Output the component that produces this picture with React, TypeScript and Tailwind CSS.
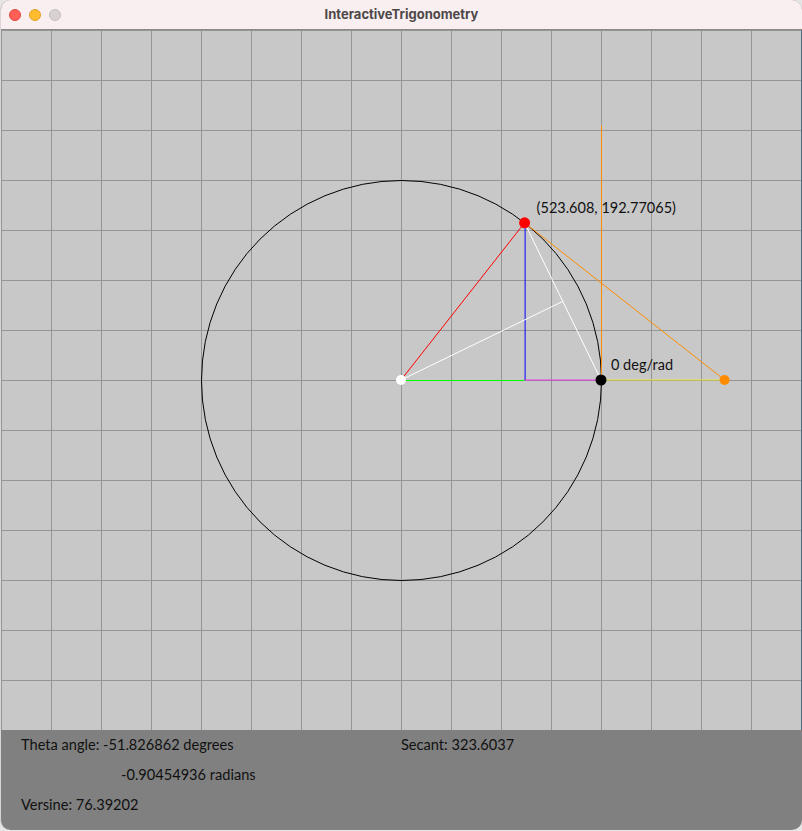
const CX = 400;
const CY = 350;
const R = 200;

const thetaDeg = -51.826862;
const thetaRad = -0.90454936;
const px = 523.608;
const py = 192.77065;
const secant = 323.6037;
const tangent = Math.tan(-thetaRad) * R;

const gridX = Array.from({ length: 17 }, (_, i) => i * 50);
const gridY = Array.from({ length: 15 }, (_, i) => i * 50);

const labelFont = "Lato, 'Open Sans', sans-serif";

function TrafficLights() {
  return (
    <div className="flex items-center gap-[8px] pl-[8px]">
      <span className="block h-[12px] w-[12px] rounded-full bg-[#fe5f57] border border-[#e2463f]" />
      <span className="block h-[12px] w-[12px] rounded-full bg-[#febc2e] border border-[#e0a028]" />
      <span className="block h-[12px] w-[12px] rounded-full bg-[#d8d2d3] border border-[#c4bebf]" />
    </div>
  );
}

function Canvas() {
  const midX = (px + CX + R) / 2;
  const midY = (py + CY) / 2;
  return (
    <svg width={800} height={700} className="block bg-[#c8c8c8]">
      {gridX.map((x) => (
        <line key={`gx${x}`} x1={x + 0.5} y1={0} x2={x + 0.5} y2={700} stroke="#959595" strokeWidth={1} />
      ))}
      {gridY.map((y) => (
        <line key={`gy${y}`} x1={0} y1={y + 0.5} x2={800} y2={y + 0.5} stroke="#959595" strokeWidth={1} />
      ))}

      <circle cx={CX + 0.5} cy={CY + 0.5} r={R} fill="none" stroke="#000" strokeWidth={1} />

      {/* cosine / sine */}
      <line x1={CX} y1={CY + 0.5} x2={px} y2={CY + 0.5} stroke="#00ff00" />
      <line x1={px + 0.5} y1={py} x2={px + 0.5} y2={CY} stroke="#0000ff" />
      <line x1={px} y1={CY} x2={CX + R} y2={CY} stroke="#ff00ff" strokeOpacity={0.7} />
      <line x1={CX + R} y1={CY} x2={CX + secant} y2={CY} stroke="#ffff00" strokeOpacity={0.7} />
      <line x1={CX} y1={CY} x2={px} y2={py} stroke="#ff0000" />

      {/* chord + bisector */}
      <line x1={px} y1={py} x2={CX + R} y2={CY} stroke="#ffffff" />
      <line x1={CX} y1={CY} x2={midX} y2={midY} stroke="#ffffff" />

      {/* tangent */}
      <line x1={CX + R + 0.5} y1={CY} x2={CX + R + 0.5} y2={CY - tangent} stroke="#ff8c00" />
      <line x1={px} y1={py} x2={CX + secant} y2={CY} stroke="#ff8c00" />

      <circle cx={CX} cy={CY} r={5} fill="#ffffff" />
      <circle cx={CX + R} cy={CY} r={5.5} fill="#000000" />
      <circle cx={CX + secant} cy={CY} r={5} fill="#ff8c00" />
      <circle cx={px} cy={py} r={5.5} fill="#ff0000" />

      <text x={px + 12} y={py - 10} fontSize={14.5} fill="#111" fontFamily={labelFont}>
        ({px}, {py})
      </text>
      <text x={CX + R + 10} y={CY - 10} fontSize={14.5} fill="#111" fontFamily={labelFont}>
        0 deg/rad
      </text>
    </svg>
  );
}

export default function App() {
  return (
    <div className="h-[831px] w-[802px] bg-[#e6e6e6] font-['Lato',sans-serif]">
      <div className="flex h-[830px] w-[802px] flex-col overflow-hidden rounded-[10px] border-l border-[#d9d4d5] bg-[#808080]">
        <header className="relative flex h-[30px] shrink-0 items-center border-b border-[#8a8a8a] bg-[#f9eff0]">
          <TrafficLights />
          <h1 className="absolute inset-x-0 text-center font-['Inter',sans-serif] text-[13px] font-bold text-[#4d4849]">
            InteractiveTrigonometry
          </h1>
        </header>

        <div className="flex">
          <Canvas />
          <div className="w-[1px] bg-[#4b6f86]" />
        </div>

        <div className="grid grid-cols-[400px_1fr] text-[14.6px] leading-[30px] text-[#111]">
          <span className="pl-5">Theta angle: {thetaDeg} degrees</span>
          <span>Secant: {secant}</span>
          <span className="col-span-2 pl-[120px]">{thetaRad} radians</span>
          <span className="col-span-2 pl-5">Versine: 76.39202</span>
        </div>
      </div>
    </div>
  );
}
